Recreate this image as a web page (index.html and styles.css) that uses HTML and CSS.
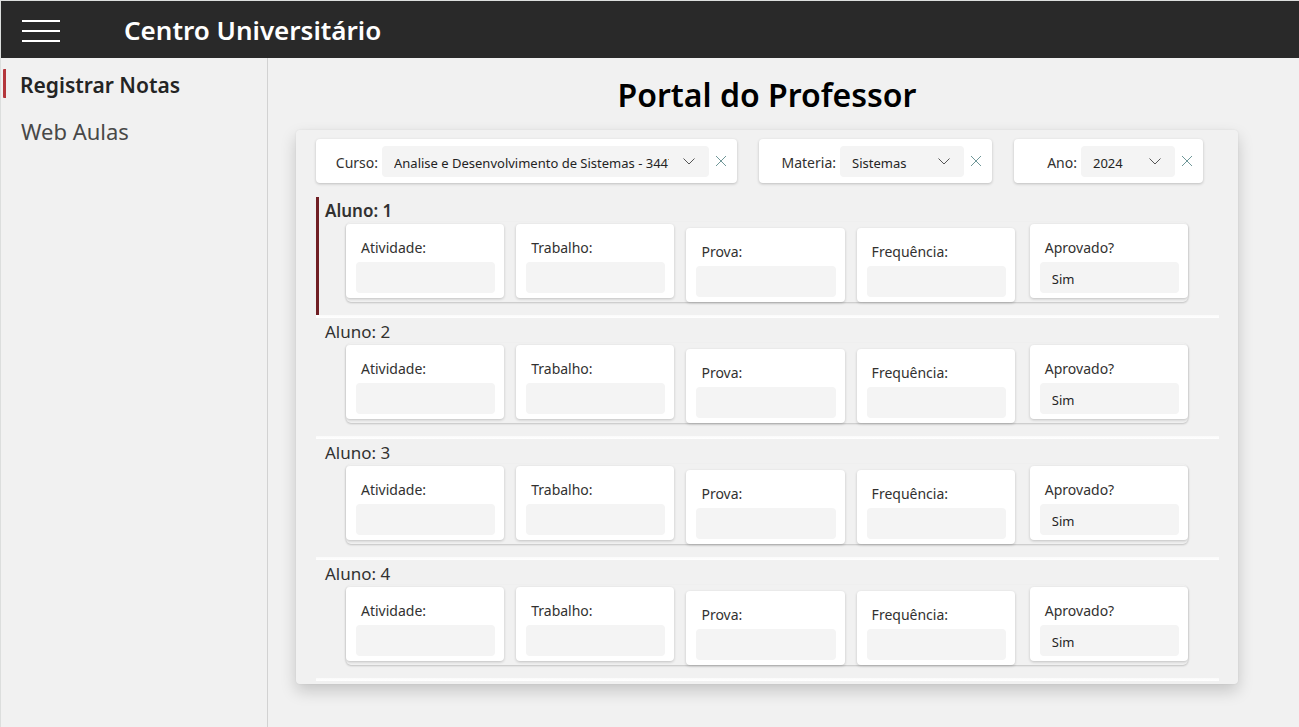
FILE: index.html
```html
<!DOCTYPE html>
<html lang="pt-BR">
<head>
<meta charset="utf-8">
<meta name="viewport" content="width=device-width, initial-scale=1">
<title>Portal do Professor</title>
<link rel="stylesheet" href="styles.css">
</head>
<body>
<header class="topbar">
  <button class="menu" type="button" aria-label="Menu">
    <svg width="38" height="22" viewBox="0 0 38 22" fill="none" stroke="#fff" stroke-width="2"><path d="M0 1h38M0 11h38M0 21h38"/></svg>
  </button>
  <span class="brand">Centro Universitário</span>
</header>
<div class="layout">
  <nav class="sidebar">
    <a class="nav-link active" href="#notas">Registrar Notas</a>
    <a class="nav-link" href="#aulas">Web Aulas</a>
  </nav>
  <main class="main">
    <h1 class="title">Portal do Professor</h1>
    <section class="panel">
      <form class="filters">
        <div class="filter filter-course">
          <label for="curso">Curso:</label>
          <div class="picker">
            <select id="curso"><option>Analise e Desenvolvimento de Sistemas - 3447</option></select>
            <svg class="chevron" viewBox="0 0 12 7"><path d="M.5.5 6 6 11.5.5"/></svg>
          </div>
          <button class="clear" type="button" aria-label="Limpar curso"><svg viewBox="0 0 10 10"><path d="M0 0 10 10M10 0 0 10"/></svg></button>
        </div>
        <div class="filter filter-subject">
          <label for="materia">Materia:</label>
          <div class="picker">
            <select id="materia"><option>Sistemas</option></select>
            <svg class="chevron" viewBox="0 0 12 7"><path d="M.5.5 6 6 11.5.5"/></svg>
          </div>
          <button class="clear" type="button" aria-label="Limpar materia"><svg viewBox="0 0 10 10"><path d="M0 0 10 10M10 0 0 10"/></svg></button>
        </div>
        <div class="filter filter-year">
          <label for="ano">Ano:</label>
          <div class="picker">
            <select id="ano"><option>2024</option></select>
            <svg class="chevron" viewBox="0 0 12 7"><path d="M.5.5 6 6 11.5.5"/></svg>
          </div>
          <button class="clear" type="button" aria-label="Limpar ano"><svg viewBox="0 0 10 10"><path d="M0 0 10 10M10 0 0 10"/></svg></button>
        </div>
      </form>

      <section class="student selected">
        <h2 class="student-name">Aluno: 1</h2>
        <div class="grades">
          <div class="field"><label for="atividade1">Atividade:</label><input id="atividade1" type="text"></div>
          <div class="field"><label for="trabalho1">Trabalho:</label><input id="trabalho1" type="text"></div>
          <div class="field low"><label for="prova1">Prova:</label><input id="prova1" type="text"></div>
          <div class="field low"><label for="frequencia1">Frequência:</label><input id="frequencia1" type="text"></div>
          <div class="field approved"><label for="aprovado1">Aprovado?</label><input id="aprovado1" type="text" value="Sim"></div>
        </div>
      </section>
      <section class="student">
        <h2 class="student-name">Aluno: 2</h2>
        <div class="grades">
          <div class="field"><label for="atividade2">Atividade:</label><input id="atividade2" type="text"></div>
          <div class="field"><label for="trabalho2">Trabalho:</label><input id="trabalho2" type="text"></div>
          <div class="field low"><label for="prova2">Prova:</label><input id="prova2" type="text"></div>
          <div class="field low"><label for="frequencia2">Frequência:</label><input id="frequencia2" type="text"></div>
          <div class="field approved"><label for="aprovado2">Aprovado?</label><input id="aprovado2" type="text" value="Sim"></div>
        </div>
      </section>
      <section class="student">
        <h2 class="student-name">Aluno: 3</h2>
        <div class="grades">
          <div class="field"><label for="atividade3">Atividade:</label><input id="atividade3" type="text"></div>
          <div class="field"><label for="trabalho3">Trabalho:</label><input id="trabalho3" type="text"></div>
          <div class="field low"><label for="prova3">Prova:</label><input id="prova3" type="text"></div>
          <div class="field low"><label for="frequencia3">Frequência:</label><input id="frequencia3" type="text"></div>
          <div class="field approved"><label for="aprovado3">Aprovado?</label><input id="aprovado3" type="text" value="Sim"></div>
        </div>
      </section>
      <section class="student">
        <h2 class="student-name">Aluno: 4</h2>
        <div class="grades">
          <div class="field"><label for="atividade4">Atividade:</label><input id="atividade4" type="text"></div>
          <div class="field"><label for="trabalho4">Trabalho:</label><input id="trabalho4" type="text"></div>
          <div class="field low"><label for="prova4">Prova:</label><input id="prova4" type="text"></div>
          <div class="field low"><label for="frequencia4">Frequência:</label><input id="frequencia4" type="text"></div>
          <div class="field approved"><label for="aprovado4">Aprovado?</label><input id="aprovado4" type="text" value="Sim"></div>
        </div>
      </section>
    </section>
  </main>
</div>
</body>
</html>
```
FILE: styles.css
```css
* { box-sizing: border-box; }

body {
  margin: 0;
  min-height: 100vh;
  display: flex;
  flex-direction: column;
  background: #f1f1f1;
  color: #323130;
  font: 14px/20px "Noto Sans", "Open Sans", sans-serif;
  border-top: 1px solid #dcdedd;
  border-left: 1px solid #dcdedd;
}

button { border: 0; padding: 0; background: none; cursor: pointer; }

.topbar {
  display: flex;
  align-items: center;
  gap: 64px;
  height: 57px;
  padding: 0 21px;
  background: #292929;
}
.menu { display: flex; padding-top: 2px; }
.brand { color: #fff; font-size: 26px; line-height: 36px; font-weight: 600; }

.layout { flex: 1; display: flex; }

.sidebar {
  flex: 0 0 267px;
  padding-top: 11px;
  border-right: 1px solid #d2d2d2;
}
.nav-link {
  display: block;
  margin: 0 0 19px 2px;
  padding-left: 18px;
  color: #484848;
  font-size: 22px;
  line-height: 29px;
  text-decoration: none;
}
.nav-link.active {
  padding: 3px 0 0 14px;
  border-left: 3px solid #b4373c;
  border-radius: 1px;
  color: #242424;
  font-size: 21px;
  line-height: 26px;
  font-weight: 600;
}

.main { flex: 1; min-width: 0; padding: 15px 61px 40px 28px; }

.title {
  margin: 0 0 13px;
  color: #000;
  font-size: 32px;
  line-height: 44px;
  font-weight: 600;
  text-align: center;
}

.panel {
  padding: 9px 19px 3px 20px;
  border-radius: 4px;
  box-shadow: 0 7px 16px rgba(0, 0, 0, .18), 0 0 2px rgba(0, 0, 0, .08);
}

.filters { display: flex; gap: 22px; margin: 0 16px 14px 0; }
.filter {
  display: flex;
  align-items: center;
  justify-content: flex-end;
  height: 44px;
  padding-right: 11px;
  border-radius: 4px;
  background: #fff;
  box-shadow: 0 1px 3px rgba(0, 0, 0, .22);
}
.filter-course { flex: 0 1 421px; }
.filter-subject { flex: 0 1 233px; }
.filter-year { flex: 0 1 189px; }
.filter label { padding-top: 3px; }

.picker { position: relative; margin: 0 7px 0 4px; }
.filter-course .picker { flex: 0 1 327px; }
.filter-subject .picker { flex: 0 1 124px; }
.filter-year .picker { flex: 0 1 94px; }
.picker select {
  display: block;
  width: 100%;
  height: 31px;
  padding: 3px 40px 0 12px;
  appearance: none;
  border: 0;
  border-radius: 4px;
  background: #f4f4f4;
  color: #242424;
  font: 13px/20px "Noto Sans", "Open Sans", sans-serif;
}
.chevron {
  position: absolute;
  top: 12px;
  right: 14px;
  width: 12px;
  height: 7px;
  fill: none;
  stroke: #555;
  pointer-events: none;
}
.clear { display: flex; }
.clear svg { width: 10px; height: 10px; stroke: #6f9798; }

.student {
  padding: 0 31px 16px 27px;
  border-left: 3px solid transparent;
  background: linear-gradient(#fafafa, #fff) bottom / 100% 3px no-repeat border-box;
}
.student.selected { border-image: linear-gradient(#701f24 0 118px, #fff 118px) 0 0 0 3; }
.student-name {
  margin: 0 0 0 -21px;
  padding-top: 3px;
  font-size: 17px;
  line-height: 22px;
  font-weight: 400;
}
.selected .student-name { font-weight: 600; }

.grades {
  display: flex;
  gap: 12px;
  align-items: flex-start;
  padding-top: 2px;
  border-radius: 5px;
  box-shadow: 0 1px 2px rgba(0, 0, 0, .2);
}
.field {
  flex: 1;
  min-width: 0;
  padding: 14px 9px 5px 10px;
  border-radius: 4px;
  background: #fff;
  box-shadow: 0 1px 3px rgba(0, 0, 0, .2);
}
.field.low { margin-top: 4px; }
.field.approved { margin-left: 3px; }
.field label { display: block; padding: 0 0 4px 5px; }
.field input {
  display: block;
  width: 100%;
  height: 31px;
  padding: 2px 12px 0;
  border: 0;
  border-radius: 4px;
  background: #f4f4f4;
  color: #242424;
  font: 13px/20px "Noto Sans", "Open Sans", sans-serif;
}
```
